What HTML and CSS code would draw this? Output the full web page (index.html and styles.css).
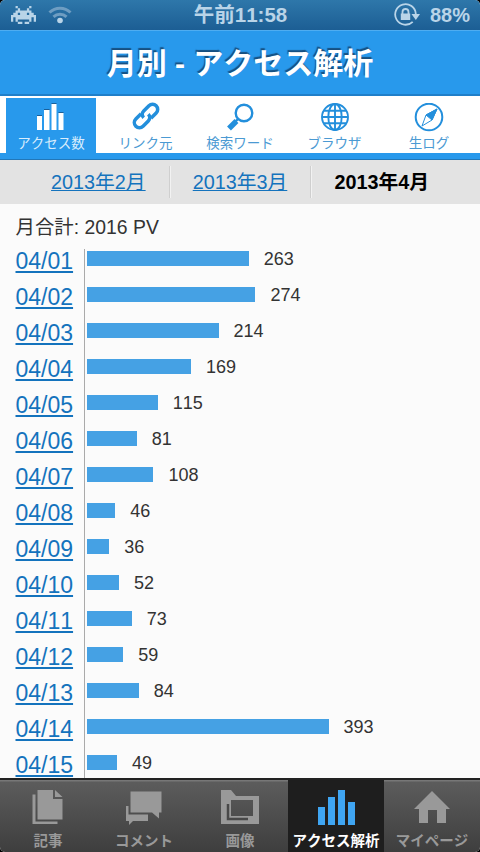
FILE: index.html
```html
<!DOCTYPE html>
<html lang="ja">
<head>
  <meta charset="UTF-8">
  <title>月別 - アクセス解析</title>
  <meta name="viewport" content="width=device-width, initial-scale=1.0">
  <link rel="stylesheet" href="styles.css">
</head>
<body>
  <div class="screen">

  <!-- status bar -->
  <div class="status">
    <div class="status-left">
      <svg width="25" height="18" viewBox="0 0 11 8" preserveAspectRatio="none" fill="#b9d4e8">
        <path d="M2 0h1v1h1v1h3V1h1V0h1v1H8v1h1v1h1v1h1v3h-1V5H9v2H8V6H3v1H2V5H1v2H0V4h1V3h1V2h1V1H2zM3 3v1h1V3zM7 3v1h1V3zM3 7h2v1H3zM6 7h2v1H6z" fill-rule="evenodd"/>
      </svg>
      <svg width="24" height="18" viewBox="0 0 24 18" fill="none" stroke="#6e9dc2" stroke-width="3">
        <path d="M1.5 6.5a15 15 0 0 1 21 0"/>
        <path d="M5.5 10.9a9.3 9.3 0 0 1 13 0"/>
        <circle cx="12" cy="14.5" r="2.8" fill="#b9d4e8" stroke="none"/>
      </svg>
    </div>
    <div class="status-time">午前11:58</div>
    <div class="status-right">
      <svg width="27" height="24" viewBox="0 0 27 24" fill="none" stroke="#b9d4e8" stroke-width="1.8">
        <path d="M18.7 18.8A10.3 10.3 0 1 1 21.8 11"/>
        <path d="M17.5 11h8.5l-4.2 6z" fill="#b9d4e8" stroke="none"/>
        <path d="M8.500 11V9a3 3 0 0 1 6 0v2"/>
        <path d="M6.8 10.5h9.4v6.5H6.8z" fill="#b9d4e8" stroke="none"/>
      </svg>
      <span>88%</span>
    </div>
  </div>

  <h1>月別 - アクセス解析</h1>

  <!-- report tabs -->
  <ul class="tabs">
    <li class="active">
      <svg width="28" height="28" viewBox="0 0 28 28" fill="#fff">
        <path d="M0 13h5v14H0zM7 7h5.500v20H7zM14.500 1h5v26h-5zM21.500 10h5v17h-5z"/>
        <path d="M0 12.500h5M7 6.500h5.500M14.500 .5h5M21.500 9.500h5" stroke="#1b5f98"/>
      </svg>
      <span>アクセス数</span>
    </li>
    <li>
      <svg class="link-icon" width="26" height="26" viewBox="0 0 28 28" fill="none" stroke="#238fdc" stroke-width="3.8">
        <g transform="rotate(-45 14 14)">
          <path d="M12 8.500H4a5.500 5.500 0 0 0 0 11H12a5 5 0 0 0 5-5"/>
          <path d="M16 19.500h8a5.500 5.500 0 0 0 0-11H16a5 5 0 0 0-5 5"/>
        </g>
      </svg>
      <span>リンク元</span>
    </li>
    <li>
      <svg width="28" height="28" viewBox="0 0 28 28" fill="none" stroke="#238fdc">
        <circle cx="18" cy="10" r="8.3" stroke-width="2.4"/>
        <path d="M12 16l-3 3" stroke-width="2.4"/>
        <path d="M10.5 18l-7.5 7.5" stroke-width="5.4"/>
      </svg>
      <span>検索ワード</span>
    </li>
    <li>
      <svg width="28" height="28" viewBox="0 0 28 28" fill="none" stroke="#238fdc" stroke-width="1.9">
        <circle cx="14" cy="14" r="13"/>
        <ellipse cx="14" cy="14" rx="6.7" ry="13"/>
        <path d="M14 1v26M1 14h26M3 7.7h22M3 20.3h22"/>
      </svg>
      <span>ブラウザ</span>
    </li>
    <li>
      <svg width="30" height="30" viewBox="0 0 30 30" fill="none" stroke="#238fdc">
        <circle cx="15" cy="14" r="13.3" stroke-width="2"/>
        <path d="M23 6l-5 11-10 6 4-11z" stroke-width="1"/>
        <path d="M23 6l-5 11-6-5z" fill="#238fdc"/>
      </svg>
      <span>生ログ</span>
    </li>
  </ul>

  <ul class="months">
    <li><a href="#">2013年2月</a></li>
    <li><a href="#">2013年3月</a></li>
    <li class="current">2013年4月</li>
  </ul>

  <div class="report">
    <p class="total">月合計: 2016 PV</p>
    <div id="chart"></div>
  </div>

  <!-- bottom navigation -->
  <ul class="bottom">
    <li>
      <svg width="32" height="36" viewBox="0 0 32 36" fill="#999">
        <path d="M5.5 0H21v9h9.5v20.5h-25z"/>
        <path d="M23 0l7.5 7H23z"/>
        <path d="M.5 4.5H3.5V31.5H25.5V34H.5z"/>
      </svg>
      <span>記事</span>
    </li>
    <li>
      <svg width="38" height="36" viewBox="0 0 38 36" fill="#999">
        <path d="M5.5 1.5H36.5V22.5H34V28.5L27 22.5H5.5z"/>
        <path d="M1 16h2.5v8.5H23V31H8L4 35V31H1z"/>
      </svg>
      <span>コメント</span>
    </li>
    <li>
      <svg width="40" height="36" viewBox="0 0 40 36" fill="#999">
        <path d="M1 0h10l5 6h23v28H1zM11 10v16h22V10z" fill-rule="evenodd"/>
        <path d="M8 14v15h20" fill="none" stroke="#484848" stroke-width="2.5"/>
      </svg>
      <span>画像</span>
    </li>
    <li class="active">
      <svg width="38" height="36" viewBox="0 0 38 36" fill="#3fa5f2">
        <path d="M1 17h7v18H1zM11 7h7v28h-7zM21 0h7v35h-7zM31 12h7v23h-7z"/>
      </svg>
      <span>アクセス解析</span>
    </li>
    <li>
      <svg width="38" height="34" viewBox="0 0 38 34" fill="#999">
        <path d="M19 1l18 18h-4v14h-9V20h-9v13H6V19H1z"/>
      </svg>
      <span>マイページ</span>
    </li>
  </ul>

  </div>

  <script src="chart.js"></script>
</body>
</html>
```

FILE: styles.css
```css
body {
  margin: 0;
  background: #000;
  font-family: "Liberation Sans", "Noto Sans CJK JP", sans-serif;
  font-kerning: none;
}

ul {
  list-style: none;
  margin: 0;
  padding: 0;
}

svg {
  display: block;
}

.screen {
  display: flex;
  flex-direction: column;
  height: 852px;
  overflow: hidden;
  border-radius: 5px;
  background: #fbfbfb;
}

.status {
  display: grid;
  grid-template-columns: 1fr auto 1fr;
  align-items: center;
  height: 30px;
  flex: none;
  box-sizing: border-box;
  padding: 0 10px 0 11px;
  background: linear-gradient(#2e77aa, #1c5e94);
  color: #b9d4e8;
  font-weight: bold;
}

.status-left, .status-right {
  display: flex;
  align-items: center;
  gap: 12px;
}

.status-right {
  justify-content: flex-end;
  gap: 9px;
  font-size: 20px;
}

.status-time {
  font-size: 20.5px;
  line-height: 28px;
}

h1 {
  flex: none;
  box-sizing: border-box;
  height: 66px;
  margin: 0;
  border-top: 1px solid #4eadf1;
  border-bottom: 2px solid #207fc9;
  background: #2899ec;
  color: #fff;
  font-size: 30px;
  line-height: 65px;
  text-align: center;
  text-shadow: -1px -2px 1px #164f80;
}

.tabs {
  display: flex;
  gap: 4.5px;
  flex: none;
  box-sizing: border-box;
  height: 63px;
  padding: 2px 0 0 6px;
  border-bottom: 6px solid #2899ec;
  background: #fff;
}

.tabs li {
  display: flex;
  flex: none;
  flex-direction: column;
  align-items: center;
  width: 90px;
  padding-top: 5px;
  color: #4b9ad3;
  font-size: 13.5px;
  white-space: nowrap;
}

.tabs li span {
  margin-top: auto;
  line-height: 18px;
}

.tabs .active {
  background: #2899ec;
  color: #d9edfc;
}

.link-icon {
  overflow: visible;
}

.months {
  display: flex;
  align-items: center;
  flex: none;
  box-sizing: border-box;
  height: 45px;
  padding: 0 28px;
  border-top: 1px solid #2277b8;
  background: #e3e3e3;
  font-size: 19.8px;
}

.months li {
  flex: 1;
  line-height: 32px;
  text-align: center;
}

.months li + li {
  border-left: 1px solid #cfcfcf;
  box-shadow: inset 1px 0 #f2f2f2;
}

.months a, .day a {
  color: #1473bd;
}

.months .current {
  font-weight: bold;
}

.report {
  flex: 1;
  min-height: 0;
  overflow: hidden;
  padding: 0 15px 0 15.5px;
  color: #333;
}

.total {
  margin: 0;
  height: 45px;
  line-height: 46px;
  font-size: 19.4px;
}

.day {
  display: flex;
  height: 36px;
}

.day a {
  width: 68.5px;
  font-size: 23px;
  line-height: 25px;
}

.plot {
  display: flex;
  flex: 1;
  border-left: 1px solid #aaa;
  padding: 1.5px 0 0 2px;
}

.bar {
  height: 15px;
  background: #45a1e4;
}

.value {
  margin-left: 15px;
  font-size: 18px;
  line-height: 17px;
}

.bottom {
  display: flex;
  flex: none;
  box-sizing: border-box;
  height: 74px;
  border-top: 2px solid #222;
  background: linear-gradient(#777 1px, #5c5c5c 2px, #3e3e3e);
  color: #999;
  font-size: 14.5px;
  font-weight: bold;
}

.bottom li {
  display: flex;
  flex: 1;
  flex-direction: column;
  align-items: center;
  padding-top: 10px;
  white-space: nowrap;
}

.bottom li span {
  line-height: 22px;
  margin-top: auto;
}

.bottom .active {
  background: #1e1e1e;
  color: #fff;
}
```

FILE: chart.js
```js
const counts = [263, 274, 214, 169, 115, 81, 108, 46, 36, 52, 73, 59, 84, 393, 49];
const chart = document.getElementById('chart');

counts.forEach((count, i) => {
  const date = '04/' + String(i + 1).padStart(2, '0');
  const row = document.createElement('div');
  row.className = 'day';
  row.innerHTML = `
    <a href="#">${date}</a>
    <div class="plot">
      <div class="bar" style="width: ${count * 0.6147}px"></div>
      <span class="value">${count}</span>
    </div>
  `;
  chart.appendChild(row);
});
```
